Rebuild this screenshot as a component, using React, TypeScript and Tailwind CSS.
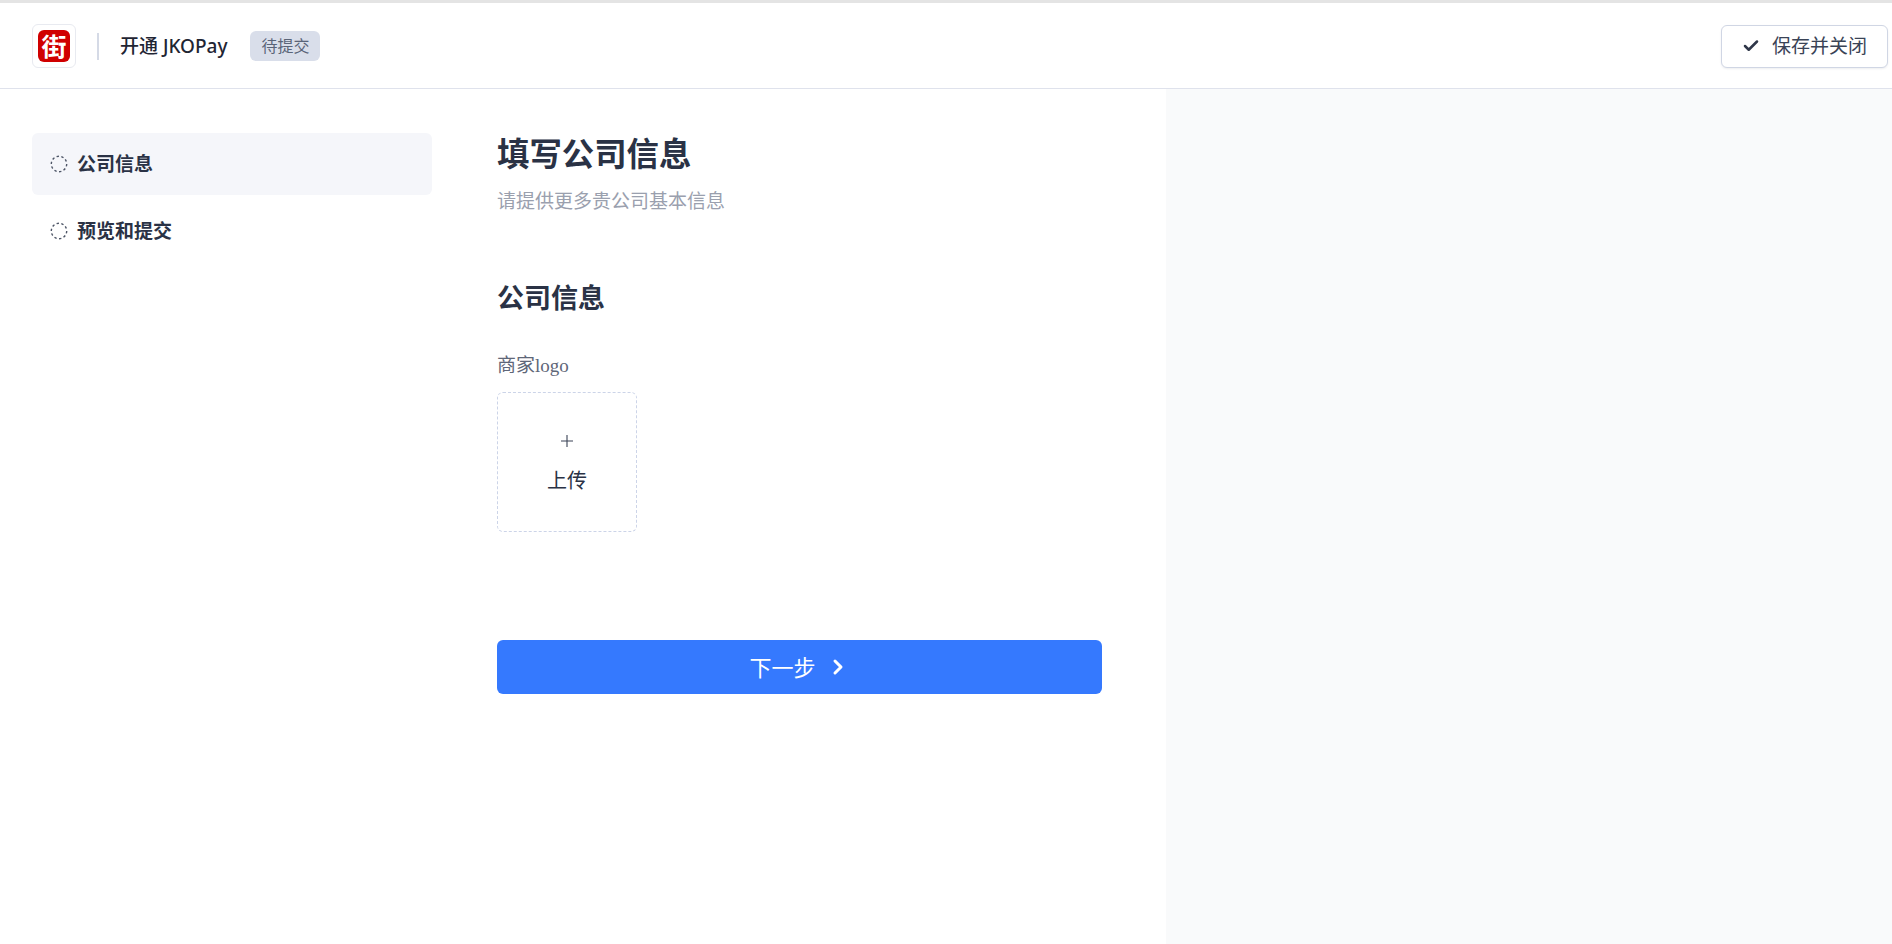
import { Check, ChevronRight } from 'lucide-react';

const cjk = "font-['Noto_Sans','Noto_Sans_CJK_SC',sans-serif]";

function DashedCircle() {
  return (
    <svg width="18" height="18" viewBox="0 0 18 18" fill="none" className="shrink-0">
      <circle cx="9" cy="9" r="7.7" stroke="#4d5566" strokeWidth="1.4" strokeDasharray="2.4 2.4" />
    </svg>
  );
}

function StepItem({ label, active }: { label: string; active?: boolean }) {
  return (
    <div className={`flex h-[62px] items-center gap-[9px] rounded-md pl-[18px] ${active ? 'bg-[#f5f6fa]' : ''}`}>
      <DashedCircle />
      <span className="text-[19px] font-bold text-[#2a3245]">{label}</span>
    </div>
  );
}

export default function App() {
  return (
    <div className={`flex h-[944px] flex-col overflow-hidden bg-white ${cjk}`}>
      <header className="flex h-[89px] shrink-0 items-center justify-between border-t-[3px] border-b border-t-[#e4e4e4] border-b-[#dfe2ec] pl-[32px] pr-[4px] pt-[1px]">
        <div className="flex items-center">
          <div className="flex h-[44px] w-[44px] items-center justify-center rounded-md border border-[#e8eaf0]">
            <div className="flex h-[32px] w-[32px] items-center justify-center rounded-md bg-[#d00000] text-[25px] leading-none font-bold text-white">
              街
            </div>
          </div>
          <div className="mx-[21px] h-[27px] w-[2px] bg-[#d5dae6]" />
          <span className="text-[19px] font-medium text-[#1f2533]">开通 JKOPay</span>
          <span className="ml-[23px] flex h-[30px] w-[70px] items-center justify-center rounded-md bg-[#d9deea] text-[16px] text-[#5a6478]">
            待提交
          </span>
        </div>
        <button className="flex h-[43px] w-[167px] items-center justify-center gap-[12px] rounded-md border border-[#d0d6e4] bg-white text-[19px] text-[#3a4356] shadow-[0_1px_2px_rgba(30,40,70,0.08)]">
          <Check size={18} strokeWidth={3.4} className="text-[#2f3749]" />
          保存并关闭
        </button>
      </header>

      <div className="flex min-h-0 flex-1">
        <div className="flex w-[1166px] shrink-0">
          <nav className="flex w-[400px] shrink-0 ml-[32px] mt-[44px] flex-col gap-[5px]">
            <StepItem label="公司信息" active />
            <StepItem label="预览和提交" />
          </nav>

          <main className="ml-[65px] mt-[42px] w-[605px]">
            <h1 className="text-[32.4px] leading-[44px] font-bold text-[#2a3245]">填写公司信息</h1>
            <p className="mt-[13px] text-[19px] leading-[26px] text-[#9aa0ae]">请提供更多贵公司基本信息</p>

            <h2 className="mt-[65px] text-[27px] leading-[38px] font-bold text-[#2a3245]">公司信息</h2>

            <label className="mt-[36px] block font-['Liberation_Serif','Noto_Sans_CJK_SC',serif] text-[19px] leading-[26px] text-[#5f6778]">
              商家logo
            </label>
            <div className="mt-[13px] flex h-[140px] w-[140px] flex-col items-center justify-center rounded-md border border-dashed border-[#ccd4e8] pt-[5px]">
              <svg width="14" height="14" viewBox="0 0 14 14" className="text-[#3a4356]">
                <path d="M1 7h12M7 1v12" stroke="currentColor" strokeWidth="1.1" />
              </svg>
              <span className="mt-[19px] text-[20px] leading-[28px] text-[#2a3245]">上传</span>
            </div>

            <button className="mt-[108px] flex h-[54px] w-full items-center justify-center gap-[10px] rounded-md bg-[#3579fe] text-[22px] text-white">
              下一步
              <ChevronRight size={24} strokeWidth={3} />
            </button>
          </main>
        </div>
        <aside className="flex-1 bg-[#f9fafb]" />
      </div>
    </div>
  );
}
